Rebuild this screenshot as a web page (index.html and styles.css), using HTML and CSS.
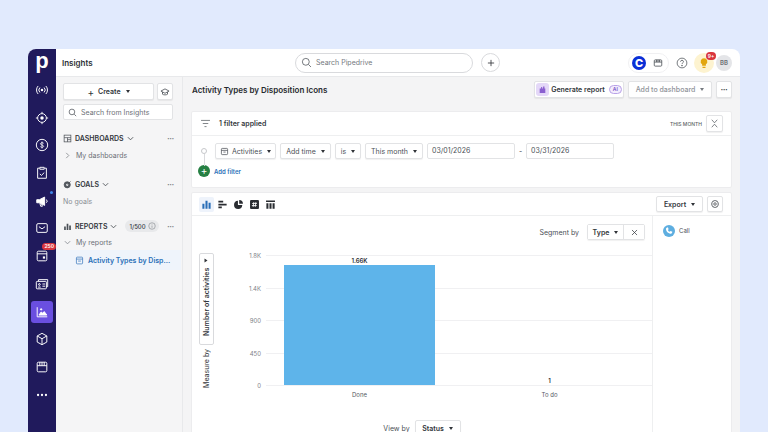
FILE: index.html
```html
<!DOCTYPE html>
<html lang="en">
<head>
  <meta charset="UTF-8">
  <meta name="viewport" content="width=device-width, initial-scale=1.0">
  <title>Insights</title>
  <link rel="stylesheet" href="styles.css">
</head>
<body>
  <div class="app">
    <!-- Left icon rail -->
    <nav class="rail">
      <div class="logo">p</div>
      <a class="rail-item"><svg viewBox="0 0 16 16"><circle cx="8" cy="8" r="1.4" fill="#fff" stroke="none"/><path d="M5.6 5.2a4 4 0 0 0 0 5.6M10.4 5.2a4 4 0 0 1 0 5.6M3.6 3.4a6.6 6.6 0 0 0 0 9.2M12.4 3.4a6.6 6.6 0 0 1 0 9.2"/></svg></a>
      <a class="rail-item"><svg viewBox="0 0 16 16"><circle cx="8" cy="8" r="5"/><circle cx="8" cy="8" r="2" fill="#fff" stroke="none"/><path d="M8 1v2M8 13v2M1 8h2M13 8h2"/></svg></a>
      <a class="rail-item"><svg viewBox="0 0 16 16"><circle cx="8" cy="8" r="6.500"/><path class="thin" d="M10 6.200C9.500 5.200 6.500 5 6.200 6.400c-.4 1.800 3.900 1.400 3.700 3.300-.3 1.300-3 1.200-3.800.1M8 4v8"/></svg></a>
      <a class="rail-item"><svg viewBox="0 0 16 16"><path d="M5 2.500H3v11.500h10V2.500h-2M5.500 1.500h5v2.200h-5zM5.500 9l1.800 1.800 3.300-3.300"/></svg></a>
      <a class="rail-item has-dot"><svg viewBox="0 0 16 16"><path d="M2 6.500v3.500h3l6 3V3.500l-6 3z" fill="#fff"/><path d="M5.500 10.500l1 3.500h2l-1-2.700M12.500 6.500c1 .4 1.500 1 1.500 1.700s-.5 1.300-1.500 1.700"/></svg></a>
      <a class="rail-item"><svg viewBox="0 0 16 16"><rect x="2" y="3" width="12" height="10" rx="1.500"/><path d="M4.500 6.500L8 9l3.500-2.500"/></svg></a>
      <a class="rail-item has-badge"><span class="rail-badge">250</span><svg viewBox="0 0 16 16"><rect x="2.500" y="2.500" width="11" height="11" rx="1.500"/><path d="M2.500 5.500h11"/><rect x="9" y="8.500" width="2.500" height="2.500" fill="#fff" stroke="none"/></svg></a>
      <a class="rail-item"><svg viewBox="0 0 16 16"><path d="M4 4.500V3h10.500v8H13"/><rect x="1.500" y="5" width="11.500" height="8.500" rx="1"/><circle cx="5" cy="8.500" r="1"/><path d="M3.500 11.500h3M8.500 8h3M8.500 10.500h3"/></svg></a>
      <a class="rail-item active"><svg viewBox="0 0 16 16"><path d="M2.500 2.500v11h11.500"/><path d="M4.500 11.500l2.500-3.500 2 1.500 1.500-2 3 4z" fill="#fff"/><circle cx="7" cy="5" r=".8" fill="#fff"/></svg></a>
      <a class="rail-item"><svg viewBox="0 0 16 16"><path d="M8 1.500l5.500 3v7L8 14.500l-5.500-3v-7zM2.500 4.500L8 7.700l5.500-3.200M8 7.700v6.800"/></svg></a>
      <a class="rail-item"><svg viewBox="0 0 16 16"><rect x="2.500" y="2.500" width="11" height="11" rx="1.500"/><path d="M2.500 6.500h11M5.500 2.500v4M8 2.500v4M10.500 2.500v4"/></svg></a>
      <a class="rail-item"><svg viewBox="0 0 16 16"><circle cx="3.500" cy="8" r="1.300" class="dot"/><circle cx="8" cy="8" r="1.300" class="dot"/><circle cx="12.500" cy="8" r="1.300" class="dot"/></svg></a>
    </nav>

    <div class="shell">
      <header class="topbar">
        <div class="page-name">Insights</div>
        <div class="global-search">
          <svg class="ico" viewBox="0 0 16 16"><circle cx="7" cy="7" r="5"/><path d="M11 11l3.500 3.500"/></svg>
          <span>Search Pipedrive</span>
        </div>
        <div class="global-add"><svg class="ico" viewBox="0 0 16 16"><path d="M8 3v10M3 8h10"/></svg></div>
        <div class="top-right">
          <div class="app-pill">
            <span class="c-logo">C</span>
            <svg class="ico" viewBox="0 0 16 16"><rect x="2" y="3" width="12" height="10" rx="1.500"/><path d="M2 6.500h12M5.500 3v3.500M8 3v3.500M10.500 3v3.500"/></svg>
          </div>
          <svg class="ico help" viewBox="0 0 16 16"><circle cx="8" cy="8" r="6.500"/><path d="M6 6.300c0-2.600 4-2.600 4 0 0 1.500-2 1.500-2 3"/><circle cx="8" cy="11.500" r=".6"/></svg>
          <div class="tips">
            <span class="tips-badge">9+</span>
            <svg viewBox="0 0 16 16"><path d="M8 1.500a4.500 4.500 0 0 0-2.500 8.200V11.500h5V9.700A4.500 4.500 0 0 0 8 1.500zM6 13h4v1.500H6z" fill="#e2a60f"/></svg>
          </div>
          <div class="avatar">BB</div>
        </div>
      </header>

      <div class="content">
        <aside class="side">
          <div class="side-top">
            <button class="btn create"><span class="plus">+</span> Create <i class="caret"></i></button>
            <button class="btn hat"><svg class="ico" viewBox="0 0 16 16"><path d="M8 3L1.500 6.500 8 10l6.500-3.500zM4 8v3.500c2 1.500 6 1.500 8 0V8"/></svg></button>
          </div>
          <div class="side-search">
            <svg class="ico" viewBox="0 0 16 16"><circle cx="7" cy="7" r="5"/><path d="M11 11l3.500 3.500"/></svg>
            <span>Search from Insights</span>
          </div>

          <div class="sec sec-first">
            <svg class="ico" viewBox="0 0 16 16"><rect x="2" y="2" width="12" height="12"/><path d="M2 6.500h12M8 6.500V14M8 10h6"/></svg>
            <b>DASHBOARDS</b><svg class="chev" viewBox="0 0 8 8"><path d="M1 2.500l3 3 3-3"/></svg>
            <span class="more">•••</span>
          </div>
          <div class="sub"><svg class="chev light" viewBox="0 0 8 8"><path d="M2.500 1l3 3-3 3"/></svg>My dashboards</div>

          <div class="sec sec-goals">
            <svg class="ico" viewBox="0 0 16 16"><circle cx="7.500" cy="8.500" r="5.500" fill="#555a60"/><circle cx="7.500" cy="8.500" r="2" fill="#f5f5f6" stroke="none"/><path d="M8 8l5.500-5.500"/></svg>
            <b>GOALS</b><svg class="chev" viewBox="0 0 8 8"><path d="M1 2.500l3 3 3-3"/></svg>
            <span class="more">•••</span>
          </div>
          <div class="empty">No goals</div>

          <div class="sec sec-reports">
            <svg class="ico solid" viewBox="0 0 16 16"><path d="M2 8h3v6H2zM6.500 3h3v11h-3zM11 6h3v8h-3z"/></svg>
            <b>REPORTS</b><svg class="chev" viewBox="0 0 8 8"><path d="M1 2.500l3 3 3-3"/></svg>
            <span class="quota">1/500 <svg viewBox="0 0 16 16"><circle cx="8" cy="8" r="6.500"/><path d="M8 7v4.500M8 4.500v1"/></svg></span>
            <span class="more">•••</span>
          </div>
          <div class="sub sub-reports"><svg class="chev light" viewBox="0 0 8 8"><path d="M1 2.500l3 3 3-3"/></svg>My reports</div>
          <div class="report-row">
            <svg class="ico" viewBox="0 0 16 16"><rect x="2.500" y="2" width="11" height="12" rx="1.500"/><path d="M2.500 5.500h11M5.500 9h5"/></svg>
            <span>Activity Types by Disp...</span>
          </div>
        </aside>

        <main class="main">
          <div class="head">
            <h1>Activity Types by Disposition Icons</h1>
            <div class="head-actions">
              <button class="btn gen">
                <span class="gen-ico"><svg viewBox="0 0 16 16"><path d="M3 14V6h2.500V3.500h2V6H9V2.500h2.500V6H13v8z"/></svg></span>
                Generate report <span class="ai">AI</span>
              </button>
              <button class="btn add-dash">Add to dashboard <i class="caret"></i></button>
              <button class="btn dots">•••</button>
            </div>
          </div>

          <section class="card filters">
            <div class="filters-head">
              <svg class="ico" viewBox="0 0 16 16"><path d="M1.500 3.500h13M4 8h8M6.500 12.500h3"/></svg>
              <b>1 filter applied</b>
              <span class="period">THIS MONTH</span>
              <button class="btn collapse"><svg class="ico" viewBox="0 0 16 16"><path d="M4 2.500l4 4.500 4-4.500M4 13.500L8 9l4 4.500"/></svg></button>
            </div>
            <div class="filters-body">
              <div class="rule">
                <span class="rule-dot"></span>
                <button class="btn sel"><svg class="ico" viewBox="0 0 16 16"><rect x="2.500" y="2.500" width="11" height="11" rx="1.500"/><path d="M2.500 6h11M6 9h4"/></svg>Activities <i class="caret"></i></button>
                <button class="btn sel">Add time <i class="caret"></i></button>
                <button class="btn sel">is <i class="caret"></i></button>
                <button class="btn sel">This month <i class="caret"></i></button>
                <div class="date">03/01/2026</div>
                <span class="dash">-</span>
                <div class="date">03/31/2026</div>
              </div>
              <div class="add-filter"><span class="add-round">+</span>Add filter</div>
            </div>
          </section>

          <section class="card report">
            <div class="toolbar">
              <div class="chart-types">
                <span class="type on"><svg viewBox="0 0 16 16"><path d="M2 7h3v7H2zM6.500 2.500h3V14h-3zM11 5.500h3V14h-3z"/></svg></span>
                <span class="type"><svg viewBox="0 0 16 16"><path d="M2 2.500h7v2.500H2zM2 6.800h12v2.500H2zM2 11h5v2.500H2z"/></svg></span>
                <span class="type"><svg viewBox="0 0 16 16"><path d="M7.200 2.500a6 6 0 1 0 6.300 6.300H7.200zM9 1.500V7h5.500A5.500 5.500 0 0 0 9 1.500z"/></svg></span>
                <span class="type"><svg viewBox="0 0 16 16"><rect x="1.500" y="1.500" width="13" height="13" rx="1.500"/><path class="hash" d="M7 4.500L6 11.500M10 4.500L9 11.500M4.500 6.500h7M4.200 9.500h7"/></svg></span>
                <span class="type"><svg viewBox="0 0 16 16"><path d="M1.500 2h13v2.500h-13zM2 6h3v8H2zM6.500 6h3v8h-3zM11 6h3v8h-3z"/></svg></span>
              </div>
              <div class="toolbar-right">
                <button class="btn export">Export <i class="caret"></i></button>
                <button class="btn gear"><svg class="ico" viewBox="0 0 16 16"><circle cx="8" cy="8" r="2"/><path d="M8 1.800l1.300 1.500 2-.2.500 2 1.700 1-.8 1.900.8 1.900-1.700 1-.5 2-2-.2L8 14.200l-1.300-1.500-2 .2-.5-2-1.700-1 .8-1.900-.8-1.900 1.700-1 .5-2 2 .2z"/></svg></button>
              </div>
            </div>
            <div class="report-body">
              <div class="chart-col">
                <div class="segment">
                  <span>Segment by</span>
                  <div class="seg-ctl"><button class="seg-type">Type <i class="caret"></i></button><button class="seg-x"><svg class="ico" viewBox="0 0 16 16"><path d="M3.500 3.500l9 9M12.500 3.500l-9 9"/></svg></button></div>
                </div>
                <div class="chart-row">
                  <div class="measure">
                    <button class="measure-btn"><span>Number of activities</span><i class="caret"></i></button>
                    <span class="measure-label">Measure by</span>
                  </div>
                  <svg class="plot" viewBox="0 0 438 150" width="438" height="150">
                    <g class="grid">
                      <line x1="52" x2="438" y1="4.500" y2="4.500"/>
                      <line x1="52" x2="438" y1="37.500" y2="37.500"/>
                      <line x1="52" x2="438" y1="69.500" y2="69.500"/>
                      <line x1="52" x2="438" y1="102.500" y2="102.500"/>
                      <line x1="52" x2="438" y1="134.500" y2="134.500"/>
                    </g>
                    <g class="ticks">
                      <text x="47" y="7">1.8K</text>
                      <text x="47" y="40">1.4K</text>
                      <text x="47" y="72">900</text>
                      <text x="47" y="105">450</text>
                      <text x="47" y="137">0</text>
                    </g>
                    <rect class="bar" x="70" y="14" width="151" height="120"/>
                    <text class="val" x="145.500" y="11.500">1.66K</text>
                    <text class="val" x="335.500" y="131.500">1</text>
                    <text class="cat" x="145.500" y="146">Done</text>
                    <text class="cat" x="335.500" y="146">To do</text>
                  </svg>
                </div>
                <div class="viewby">
                  <span>View by</span>
                  <button class="btn status">Status <i class="caret"></i></button>
                </div>
              </div>
              <div class="legend">
                <span class="call-ico"><svg viewBox="0 0 16 16"><path d="M5 3.500l1.500-.5 1 2.500-1 1c.5 1.200 1.300 2 2.500 2.500l1-1 2.500 1-.5 1.500c-.5 1-1.500 1.200-2.500 1-3-.7-5-2.700-5.500-5.500-.2-1 .2-2 1-2.500z"/></svg></span>
                <span>Call</span>
              </div>
            </div>
          </section>
        </main>
      </div>
    </div>
  </div>
</body>
</html>
```

FILE: styles.css
```css
/* Basic styling */
* { box-sizing: border-box; }
body {
  margin: 0;
  height: 432px;
  padding: 49px 28px 0;
  overflow: hidden;
  background-color: #e1eafd;
  font-family: Inter, "Noto Sans", sans-serif;
  font-size: 7px;
  color: #3d4147;
  white-space: nowrap;
}
svg { display: block; }
button { font-family: inherit; white-space: nowrap; }
.app {
  display: flex;
  height: 383px;
  border-radius: 8px 8px 0 0;
  overflow: hidden;
  background: #fff;
}
.ico {
  width: 10px;
  height: 10px;
  flex: none;
  fill: none;
  stroke: #4b5056;
  stroke-width: 1.3;
}
.ico.solid { fill: #4b5056; stroke: none; }
.caret {
  display: inline-block;
  width: 0;
  height: 0;
  border-left: 2.5px solid transparent;
  border-right: 2.5px solid transparent;
  border-top: 3px solid #2f3237;
  margin-left: 5px;
}
.btn {
  display: flex;
  align-items: center;
  justify-content: center;
  padding: 0 4px;
  background: #fff;
  border: 1px solid #e2e3e5;
  border-radius: 2px;
  box-shadow: 0 1px 1px rgba(0, 0, 0, 0.06);
  font-size: 7px;
  color: #33373c;
}

/* Icon rail */
.rail {
  width: 28px;
  flex: none;
  display: flex;
  flex-direction: column;
  align-items: center;
  background: #201a5c;
}
.logo {
  height: 30px;
  font: bold 22px/24px "Liberation Sans", sans-serif;
  color: #fff;
}
.rail-item {
  position: relative;
  width: 22px;
  height: 22px;
  margin-bottom: 5.7px;
  display: flex;
  align-items: center;
  justify-content: center;
  border-radius: 3px;
}
.rail-item svg {
  width: 14px;
  height: 14px;
  fill: none;
  stroke: #fff;
  stroke-width: 1.1;
}
.rail-item .thin { stroke-width: 0.9; }
.rail-item .dot { fill: #fff; stroke: none; }
.rail-item.active { background: #6a4fe0; }
.has-dot::after {
  content: "";
  position: absolute;
  top: 1px;
  right: 0;
  width: 3px;
  height: 3px;
  border-radius: 50%;
  background: #3f86e8;
}
.rail-badge {
  position: absolute;
  top: -2px;
  right: -3px;
  padding: 0 2px;
  border-radius: 4px;
  background: #d9363e;
  color: #fff;
  font-size: 5px;
  font-weight: 600;
  line-height: 7px;
}

/* Top bar */
.shell {
  flex: 1;
  min-width: 0;
  display: flex;
  flex-direction: column;
}
.topbar {
  height: 28px;
  flex: none;
  display: flex;
  align-items: center;
  padding: 0 8px 0 6px;
  border-bottom: 1px solid #e8e9eb;
}
.page-name {
  width: 233px;
  font-size: 8px;
  font-weight: 600;
  color: #2c3035;
}
.global-search {
  width: 178px;
  height: 20px;
  display: flex;
  align-items: center;
  gap: 4px;
  padding: 0 5px;
  border: 1px solid #d9dadd;
  border-radius: 10px;
  color: #74787e;
}
.global-search .ico { width: 11px; height: 11px; stroke-width: 1.1; }
.global-add {
  width: 19px;
  height: 19px;
  margin-left: 8px;
  display: flex;
  align-items: center;
  justify-content: center;
  border: 1px solid #d9dadd;
  border-radius: 50%;
}
.global-add .ico { stroke: #2c3035; }
.top-right {
  margin-left: auto;
  display: flex;
  align-items: center;
}
.app-pill {
  display: flex;
  align-items: center;
  gap: 7px;
  height: 20px;
  padding: 0 5px 0 3px;
  border: 1px solid #f0f0f2;
  border-radius: 10px;
}
.c-logo {
  width: 14px;
  height: 14px;
  border-radius: 50%;
  background: #0a2fd6;
  color: #fff;
  font-size: 11px;
  font-weight: 800;
  line-height: 14px;
  text-align: center;
}
.help { width: 12px; height: 12px; margin-left: 7px; stroke-width: 1; }
.tips {
  position: relative;
  width: 20px;
  height: 20px;
  margin-left: 6px;
  display: flex;
  align-items: center;
  justify-content: center;
  border-radius: 50%;
  background: #fdf3d0;
}
.tips svg { width: 12px; height: 12px; }
.tips-badge {
  position: absolute;
  top: -1px;
  right: -2px;
  width: 10px;
  height: 8px;
  border-radius: 4px;
  background: #d9363e;
  color: #fff;
  font-size: 5px;
  font-weight: 600;
  line-height: 8px;
  text-align: center;
}
.avatar {
  width: 16px;
  height: 16px;
  margin-left: 2px;
  border-radius: 50%;
  background: #e4e5e8;
  color: #6a6e74;
  font-size: 6px;
  font-weight: 600;
  line-height: 16px;
  text-align: center;
}

/* Insights sidebar */
.content {
  flex: 1;
  min-height: 0;
  display: flex;
}
.side {
  width: 127px;
  flex: none;
  padding: 6px 9px 0 7px;
  background: #f5f5f6;
  border-right: 1px solid #e8e9eb;
}
.side-top {
  display: flex;
  justify-content: space-between;
}
.create {
  width: 91px;
  height: 17px;
  font-weight: 600;
}
.plus { font-size: 10px; font-weight: 400; line-height: 10px; margin-right: 4px; }
.hat { width: 16px; height: 17px; padding: 0; }
.side-search {
  height: 16px;
  margin-top: 4px;
  display: flex;
  align-items: center;
  gap: 4px;
  padding: 0 4px;
  background: #fff;
  border: 1px solid #e2e3e5;
  border-radius: 2px;
  color: #6c7076;
}
.side-search .ico { width: 9px; height: 9px; }
.sec {
  display: flex;
  align-items: center;
  height: 12px;
  color: #33373c;
}
.sec b { margin-left: 3px; font-size: 7px; font-weight: 600; }
.sec .ico { width: 9px; height: 9px; }
.sec-first { margin-top: 12px; }
.sec-goals { margin-top: 17px; }
.sec-reports { margin-top: 12px; }
.chev {
  width: 7px;
  height: 7px;
  margin-left: 3px;
  fill: none;
  stroke: #4b5056;
  stroke-width: 1;
}
.chev.light { margin: 0 5px 0 1px; stroke: #8a8e94; }
.more {
  margin-left: auto;
  margin-right: -1px;
  font-size: 4px;
  color: #777b81;
}
.quota {
  display: flex;
  align-items: center;
  gap: 2px;
  height: 12px;
  margin-left: 8px;
  padding: 0 3px 0 4px;
  border-radius: 6px;
  background: #e8e9eb;
  font-size: 6px;
  font-weight: 500;
}
.quota svg { width: 8px; height: 8px; fill: none; stroke: #6c7076; }
.sub {
  display: flex;
  align-items: center;
  height: 12px;
  margin-top: 5px;
  color: #6c7076;
}
.sub-reports { margin-top: 4px; }
.empty {
  margin-top: 6px;
  height: 12px;
  line-height: 12px;
  color: #8a8e94;
}
.report-row {
  display: flex;
  align-items: center;
  gap: 4px;
  height: 20px;
  margin: 2px -8px 0 -7px;
  padding-left: 19px;
  background: #eff4fb;
  color: #2a6fb8;
  font-weight: 600;
}
.report-row .ico { width: 9px; height: 9px; stroke: #3b79bd; }

/* Main area */
.main {
  flex: 1;
  min-width: 0;
  padding: 4px 8px 0;
  background: #f4f4f5;
}
.head {
  display: flex;
  align-items: center;
  justify-content: space-between;
  height: 17px;
  margin-left: 1px;
}
h1 {
  margin: 0;
  font-size: 8px;
  font-weight: 600;
  color: #26292e;
}
.head-actions {
  display: flex;
  gap: 4px;
}
.head-actions .btn { height: 17px; }
.gen { width: 90px; padding: 0 2px; font-weight: 600; gap: 2px; }
.gen-ico {
  width: 13px;
  height: 13px;
  padding: 2px;
  border-radius: 3px;
  background: #e4d8f8;
}
.gen-ico svg { width: 9px; height: 9px; fill: #8a5fd0; }
.ai {
  margin-left: 2px;
  padding: 0 3px;
  border: 1px solid #b9a2e8;
  border-radius: 5px;
  background: #f3edfd;
  color: #7a55c8;
  font-size: 5px;
  line-height: 7px;
}
.add-dash { width: 84px; color: #8f9399; font-weight: 500; }
.add-dash .caret { border-top-color: #777b81; margin-left: 5px; }
.dots { width: 16px; padding: 0; font-size: 4px; }

.card {
  background: #fff;
  border: 1px solid #ececee;
  border-radius: 2px;
}
.filters { height: 77px; margin-top: 13px; }
.filters-head {
  height: 24px;
  display: flex;
  align-items: center;
  padding: 0 8px;
  border-bottom: 1px solid #eeeff0;
}
.filters-head .ico { width: 11px; height: 11px; stroke-width: 1; }
.filters-head b { margin-left: 8px; font-weight: 600; color: #33373c; }
.period {
  margin-left: auto;
  font-size: 5px;
  font-weight: 500;
  color: #5b5f65;
}
.collapse { width: 17px; height: 17px; margin-left: 4px; padding: 0; }
.filters-body { padding: 7px 0 0 8px; }
.rule {
  display: flex;
  align-items: center;
  gap: 4px;
}
.rule-dot {
  position: relative;
  width: 6px;
  height: 6px;
  margin: 0 4px 0 1px;
  border: 1px solid #c6c8cb;
  border-radius: 50%;
}
/* line down to the add filter button */
.rule-dot::after {
  content: "";
  position: absolute;
  left: 1.500px;
  top: 5px;
  width: 1px;
  height: 12px;
  background: #d9dadd;
}
.sel { height: 16px; color: #4b5056; }
.sel .ico { width: 9px; height: 9px; margin-right: 3px; }
.sel:nth-of-type(1) { width: 61px; }
.sel:nth-of-type(2) { width: 51px; }
.sel:nth-of-type(3) { width: 26px; }
.sel:nth-of-type(4) { width: 58px; }
.date {
  width: 88px;
  height: 16px;
  padding-left: 4px;
  border: 1px solid #e2e3e5;
  border-radius: 2px;
  line-height: 14px;
  color: #4b5056;
}
.dash { width: 3px; text-align: center; }
.add-filter {
  display: flex;
  align-items: center;
  gap: 4px;
  margin-top: 6px;
  margin-left: -2px;
  color: #2a6fb8;
  font-size: 6px;
  font-weight: 600;
}
.add-round {
  width: 12px;
  height: 12px;
  border-radius: 50%;
  background: #268043;
  color: #fff;
  font-size: 10px;
  font-weight: 400;
  line-height: 11px;
  text-align: center;
}

/* Report card */
.report { margin-top: 4px; height: 260px; }
.toolbar {
  height: 23px;
  display: flex;
  align-items: center;
  justify-content: space-between;
  padding: 0 8px 0 7px;
  border-bottom: 1px solid #eeeff0;
}
.chart-types { display: flex; gap: 1px; }
.type {
  width: 15px;
  height: 15px;
  padding: 2px;
  border-radius: 2px;
}
.type svg { width: 11px; height: 11px; fill: #2a2d32; }
.type .hash { fill: none; stroke: #fff; stroke-width: 1.2; }
.type.on { background: #eef3fb; }
.type.on svg { fill: #2a6fb8; }
.toolbar-right { display: flex; gap: 4px; }
.export { width: 47px; height: 16px; font-weight: 600; }
.gear { width: 16px; height: 16px; padding: 0; }
.report-body { display: flex; }
.chart-col {
  flex: 1;
  min-width: 0;
  padding: 8px 7px 0 7px;
}
.segment {
  display: flex;
  align-items: center;
  justify-content: flex-end;
  gap: 8px;
  height: 16px;
  color: #4b5056;
}
.seg-ctl {
  display: flex;
  height: 16px;
  border: 1px solid #e2e3e5;
  border-radius: 2px;
  box-shadow: 0 1px 1px rgba(0, 0, 0, 0.06);
}
.seg-ctl button {
  display: flex;
  align-items: center;
  justify-content: center;
  border: 0;
  background: #fff;
  font-size: 7px;
  padding: 0;
}
.seg-type { width: 36px; font-weight: 600; color: #33373c; border-right: 1px solid #e2e3e5 !important; }
.seg-x { width: 20px; }
.seg-x .ico { width: 9px; height: 9px; stroke: #33373c; }
.chart-row {
  display: flex;
  margin-top: 13px;
}
.measure {
  width: 15px;
  flex: none;
  display: flex;
  flex-direction: column;
  align-items: center;
  color: #33373c;
}
.measure-btn {
  width: 15px;
  height: 92px;
  padding: 8px 0 5px;
  display: flex;
  align-items: center;
  justify-content: space-between;
  background: #fff;
  border: 1px solid #d9dadd;
  border-radius: 2px;
  font-size: 7px;
  font-weight: 600;
  color: #33373c;
  writing-mode: vertical-rl;
  transform: rotate(180deg);
}
.measure-btn .caret { margin: 0; transform: rotate(90deg); }
.measure-label {
  margin-top: 4px;
  writing-mode: vertical-rl;
  transform: rotate(180deg);
}
.plot { margin-top: -2px; flex: none; }
.grid line { stroke: #f0f0f2; stroke-width: 1; }
.ticks text {
  font-size: 6px;
  fill: #7d8187;
  text-anchor: end;
}
.bar { fill: #5eb4ea; }
.val { font-size: 6px; font-weight: 600; fill: #2c3035; text-anchor: middle; }
.cat { font-size: 6px; fill: #55595f; text-anchor: middle; }
.viewby {
  display: flex;
  align-items: center;
  justify-content: center;
  gap: 5px;
  margin-top: 19px;
  color: #4b5056;
}
.status { width: 46px; height: 16px; font-weight: 600; }
.legend {
  width: 79px;
  flex: none;
  height: 230px;
  display: flex;
  align-items: flex-start;
  gap: 4px;
  padding: 9px 0 0 10px;
  border-left: 1px solid #eeeff0;
  font-size: 6px;
  line-height: 12px;
  color: #4b5056;
}
.call-ico {
  width: 12px;
  height: 12px;
  border-radius: 50%;
  background: #5eaee0;
}
.call-ico svg { width: 12px; height: 12px; fill: #fff; }
```
